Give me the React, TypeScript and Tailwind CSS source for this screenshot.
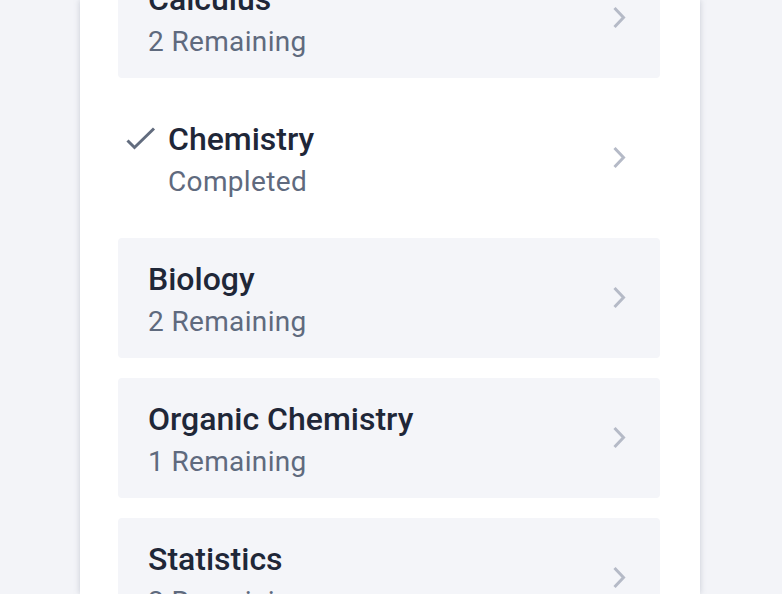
import React from "react";

type Item = { title: string; sub: string; done?: boolean };

const items: Item[] = [
  { title: "Calculus", sub: "2 Remaining" },
  { title: "Chemistry", sub: "Completed", done: true },
  { title: "Biology", sub: "2 Remaining" },
  { title: "Organic Chemistry", sub: "1 Remaining" },
  { title: "Statistics", sub: "2 Remaining" },
];

function Chevron() {
  return (
    <svg width="16" height="24" viewBox="0 0 16 24" className="shrink-0">
      <path d="M3.5 2 L12.5 11.5 L3.5 21" fill="none" stroke="#b5bac7" strokeWidth="3" />
    </svg>
  );
}

function Check() {
  return (
    <svg width="32" height="24" viewBox="0 0 32 24" className="shrink-0">
      <path d="M3.5 13.5 L10.5 20.5 L30 1.5" fill="none" stroke="#626c7e" strokeWidth="3" />
    </svg>
  );
}

export default function App() {
  return (
    <div
      className="w-[782px] h-[594px] overflow-hidden bg-[#f3f4f8] flex pl-[80px]"
      style={{ fontFamily: "Roboto, 'Liberation Sans', sans-serif" }}
    >
      <div className="w-[620px] h-full bg-white shadow-[0_0_6px_rgba(120,125,150,0.35)] pl-[38px] pr-[40px]">
        <div className="flex flex-col gap-[20px] -mt-[42px]">
          {items.map((it) => (
            <div
              key={it.title}
              className={`h-[120px] rounded-[4px] flex items-center pr-[33px] ${
                it.done ? "bg-white pl-[6px]" : "bg-[#f4f5f9] pl-[30px]"
              }`}
            >
              {it.done && (
                <div className="w-[44px] flex items-start self-start pt-[29px]">
                  <Check />
                </div>
              )}
              <div className="flex-1 flex flex-col pt-[3px]">
                <div className="text-[32px] leading-[40px] font-medium text-[#1f2738]">
                  {it.title}
                </div>
                <div className="text-[28px] leading-[36px] text-[#5f6a7e] mt-[5px] tracking-[0.35px]">
                  {it.sub}
                </div>
              </div>
              <Chevron />
            </div>
          ))}
        </div>
      </div>
    </div>
  );
}
